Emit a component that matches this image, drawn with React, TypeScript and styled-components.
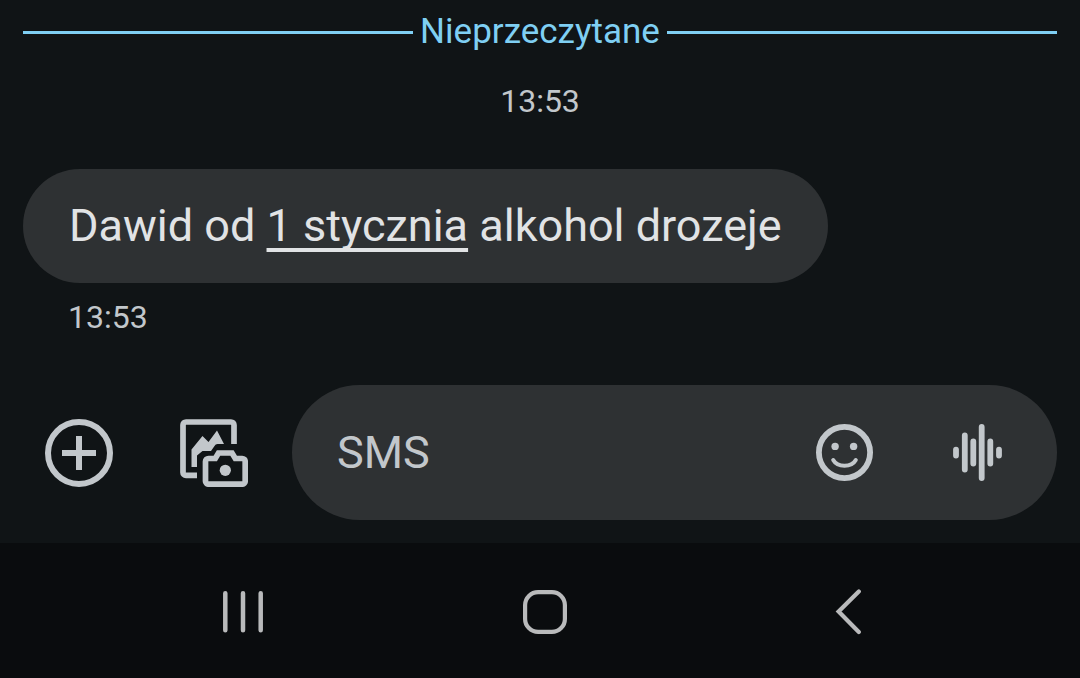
import React from 'react';
import styled, { createGlobalStyle } from 'styled-components';

const color = {
  page: '#101416',
  surface: '#2e3133',
  nav: '#0a0c0e',
  accent: '#7fcff3',
  text: '#e1e3e5',
  muted: '#c2c7cb',
  navIcon: '#b9babb',
};

const GlobalStyle = createGlobalStyle`
  * { box-sizing: border-box; }
  body {
    margin: 0;
    background: ${color.page};
    color: ${color.text};
    font-family: Roboto, "Noto Sans", sans-serif;
  }
`;

const Screen = styled.div`
  display: flex;
  flex-direction: column;
  min-height: 100vh;
`;

const Conversation = styled.main`
  flex: 1;
  display: flex;
  flex-direction: column;
  padding: 12px 23px 0;
`;

const UnreadDivider = styled.div`
  display: flex;
  align-items: center;
  gap: 7px;
  color: ${color.accent};
  font-size: 35px;
  line-height: 40px;

  &::before,
  &::after {
    content: '';
    flex: 1;
    height: 3px;
    background: currentColor;
  }
`;

const Time = styled.time<{ $placement: 'center' | 'bubble' }>`
  display: block;
  color: ${color.muted};
  font-size: 32px;
  line-height: 40px;
  ${({ $placement }) =>
    $placement === 'center'
      ? 'text-align: center; margin: 29px 0 48px;'
      : 'padding-left: 45px; margin: 14px 0 0;'}
`;

const Bubble = styled.p`
  align-self: flex-start;
  max-width: 100%;
  margin: 0;
  padding: 29px 46px;
  border-radius: 57px;
  background: ${color.surface};
  font-size: 45px;
  line-height: 56px;
`;

const DateLink = styled.a`
  color: inherit;
  text-decoration: underline;
  text-decoration-thickness: 4px;
  text-underline-offset: 7px;
  text-decoration-skip-ink: none;
`;

const Composer = styled.form`
  display: flex;
  align-items: center;
  padding: 48px 23px 23px 45px;
`;

const IconButton = styled.button`
  display: flex;
  flex: none;
  align-items: center;
  justify-content: center;
  padding: 0;
  border: 0;
  background: none;
  color: ${color.muted};
  cursor: pointer;
`;

const Attachments = styled.div`
  display: flex;
  gap: 67px;
  margin-right: 44px;
`;

const Field = styled.div`
  flex: 1;
  min-width: 0;
  display: flex;
  align-items: center;
  gap: 80px;
  height: 135px;
  padding: 0 55px 0 45px;
  border-radius: 68px;
  background: ${color.surface};
`;

const MessageInput = styled.input`
  flex: 1;
  min-width: 0;
  height: 56px;
  padding: 0;
  border: 0;
  outline: 0;
  background: none;
  color: ${color.text};
  font: inherit;
  font-size: 45px;
  line-height: 56px;

  &::placeholder {
    color: ${color.muted};
    opacity: 1;
  }
`;

const SystemNav = styled.nav`
  display: grid;
  grid-template-columns: repeat(3, 1fr);
  align-items: center;
  padding: 46px 81px 43px 92px;
  background: ${color.nav};
`;

const NavButton = styled(IconButton)`
  color: ${color.navIcon};
`;

const AddIcon = () => (
  <svg width="68" height="68" viewBox="0 0 68 68" fill="none" stroke="currentColor" strokeWidth="6">
    <circle cx="34" cy="34" r="31" />
    <path d="M34 17V51M17 34H51" />
  </svg>
);

const GalleryIcon = () => (
  <svg width="68" height="68" viewBox="0 0 68 68" fill="none" stroke="currentColor" strokeWidth="5.7">
    <path d="M17 56.4H6a3 3 0 0 1-3-3V6a3 3 0 0 1 3-3H51a3 3 0 0 1 3 3V25" />
    <path
      d="M11.5 48V30.5L22.5 17L28.5 23L37 11.5L44 25H37.5Q35.5 25 34.5 27L31 32H22.5L17 36.5V48Z"
      fill="currentColor"
      stroke="none"
    />
    <path d="M28.5 39.5H35.3L38.5 34H52L55.3 39.5H62.2a3 3 0 0 1 3 3V62.2a3 3 0 0 1-3 3H28.5a3 3 0 0 1-3-3V42.5a3 3 0 0 1 3-3Z" />
    <circle cx="45.3" cy="51.3" r="5.6" fill="currentColor" stroke="none" />
  </svg>
);

const EmojiIcon = () => (
  <svg width="57" height="57" viewBox="0 0 57 57" fill="none" stroke="currentColor">
    <circle cx="28.5" cy="28.5" r="25.6" strokeWidth="5.8" />
    <path d="M17.2 36C21.5 43.6 35.5 43.6 39.8 36" strokeWidth="4" strokeLinecap="round" />
    <circle cx="19.1" cy="22.4" r="3.7" fill="currentColor" stroke="none" />
    <circle cx="37.6" cy="22.4" r="3.7" fill="currentColor" stroke="none" />
  </svg>
);

const VoiceIcon = () => (
  <svg
    width="49"
    height="57"
    viewBox="0 0 49 57"
    fill="none"
    stroke="currentColor"
    strokeWidth="5.8"
    strokeLinecap="round"
  >
    <path d="M3 25.6V31.6M11.8 11.4V45.6M20.3 17.4V39.6M28.7 3V54M37.3 17.4V39.6M46 25.6V31.6" />
  </svg>
);

const RecentsIcon = () => (
  <svg width="44" height="46" viewBox="0 0 44 46" fill="none" stroke="currentColor" strokeWidth="4.5" strokeLinecap="round">
    <path d="M4.3 4.2V41.2M22 4.2V41.2M39.7 4.2V41.2" />
  </svg>
);

const HomeIcon = () => (
  <svg width="44" height="46" viewBox="0 0 44 46" fill="none" stroke="currentColor" strokeWidth="4.2">
    <rect x="2.1" y="3.1" width="39.8" height="39.8" rx="13" />
  </svg>
);

const BackIcon = () => (
  <svg width="28" height="46" viewBox="0 0 28 46" fill="none" stroke="currentColor" strokeWidth="4.2" strokeLinecap="round">
    <path d="M24.8 2.6L4.6 22.6L24.8 43" />
  </svg>
);

export default function App() {
  return (
    <Screen>
      <GlobalStyle />
      <Conversation>
        <UnreadDivider>Nieprzeczytane</UnreadDivider>
        <Time $placement="center">13:53</Time>
        <Bubble>
          Dawid od <DateLink href="#date">1 stycznia</DateLink> alkohol drozeje
        </Bubble>
        <Time $placement="bubble">13:53</Time>
      </Conversation>
      <Composer onSubmit={(event) => event.preventDefault()}>
        <Attachments>
          <IconButton type="button" aria-label="Dodaj">
            <AddIcon />
          </IconButton>
          <IconButton type="button" aria-label="Galeria i aparat">
            <GalleryIcon />
          </IconButton>
        </Attachments>
        <Field>
          <MessageInput type="text" placeholder="SMS" aria-label="SMS" />
          <IconButton type="button" aria-label="Emotikony">
            <EmojiIcon />
          </IconButton>
          <IconButton type="button" aria-label="Wiadomość głosowa">
            <VoiceIcon />
          </IconButton>
        </Field>
      </Composer>
      <SystemNav>
        <NavButton type="button" aria-label="Ostatnie">
          <RecentsIcon />
        </NavButton>
        <NavButton type="button" aria-label="Ekran główny">
          <HomeIcon />
        </NavButton>
        <NavButton type="button" aria-label="Wstecz">
          <BackIcon />
        </NavButton>
      </SystemNav>
    </Screen>
  );
}
